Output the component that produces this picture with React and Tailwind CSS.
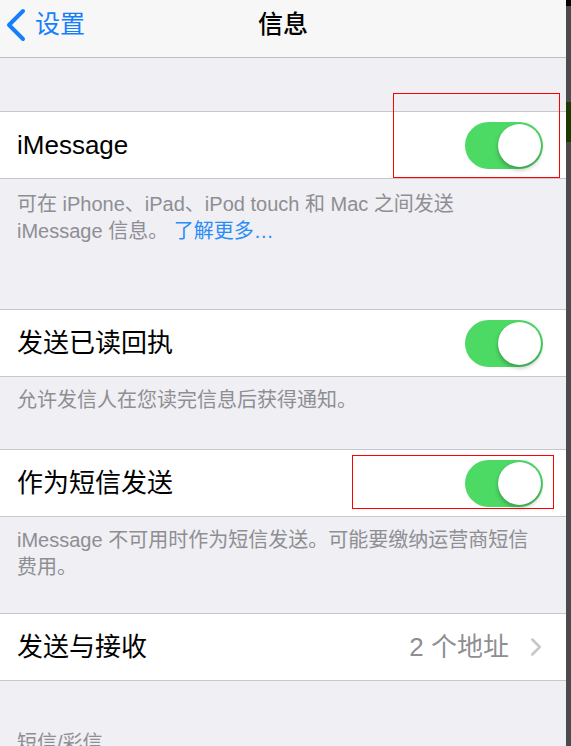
import { ChevronRight } from "lucide-react";

const FONT = {
  fontFamily: '"Liberation Sans", "Noto Sans CJK SC", sans-serif',
};

function Toggle() {
  return (
    <div className="w-[78px] h-[47px] rounded-full bg-[#4cd964] flex items-center justify-end p-[2px]">
      <div className="w-[43px] h-[43px] rounded-full bg-white shadow-[0_3px_4px_rgba(0,0,0,0.25),0_0_1px_rgba(0,0,0,0.2)]" />
    </div>
  );
}

function Row({ label, children }) {
  return (
    <div className="h-[68px] shrink-0 bg-white border-y border-[#c8c7cc] flex items-center justify-between pl-[17px] pr-[23px]">
      <span className="text-[26px] text-black">{label}</span>
      {children}
    </div>
  );
}

function Footer({ h, pt, children }) {
  return (
    <div className={`${h} ${pt} shrink-0 px-[17px] text-[20px] leading-[26.5px] text-[#8e8e93]`}>
      {children}
    </div>
  );
}

export default function App() {
  return (
    <div
      className="relative w-[571px] h-[746px] overflow-hidden flex bg-[#4b4b4b]"
      style={FONT}
    >
      <div className="w-[566px] h-full bg-[#efeff4] flex flex-col">
        {/* nav */}
        <div className="h-[58px] shrink-0 bg-[#f7f7f8] border-b border-[#bdbdc0] grid grid-cols-[1fr_auto_1fr] items-center">
          <div className="flex items-center text-[#157efb] -mt-[8px]">
            <svg width="30" height="34" viewBox="0 0 30 34" className="ml-[2px]">
              <polyline
                points="21,3 7,17 21,31"
                fill="none"
                stroke="currentColor"
                strokeWidth="4"
                strokeLinecap="round"
                strokeLinejoin="round"
              />
            </svg>
            <span className="text-[25px] ml-[3px]">设置</span>
          </div>
          <div className="text-[25px] font-medium text-black -mt-[8px]">信息</div>
          <div />
        </div>

        <div className="h-[53px] shrink-0" />

        <Row label="iMessage">
          <Toggle />
        </Row>
        <Footer h="h-[130px]" pt="pt-[12px]">
          可在 iPhone、iPad、iPod touch 和 Mac 之间发送
          <br />
          iMessage 信息。 <span className="text-[#2a8cf7]">了解更多…</span>
        </Footer>

        <Row label="发送已读回执">
          <Toggle />
        </Row>
        <Footer h="h-[72px]" pt="pt-[10px]">
          允许发信人在您读完信息后获得通知。
        </Footer>

        <Row label="作为短信发送">
          <Toggle />
        </Row>
        <Footer h="h-[96px]" pt="pt-[10px]">
          iMessage 不可用时作为短信发送。可能要缴纳运营商短信
          <br />
          费用。
        </Footer>

        <Row label="发送与接收">
          <div className="flex items-center text-[#8e8e93]">
            <span className="text-[26px]">2 个地址</span>
            <ChevronRight className="w-[30px] h-[30px] ml-[12px] -mr-[8px] text-[#c7c7cc]" strokeWidth={2} />
          </div>
        </Row>
        <div className="shrink-0 pt-[49px] px-[17px] text-[20px] leading-[26px] text-[#8e8e93]">
          短信/彩信
        </div>
      </div>

      {/* right strip */}
      <div className="flex-1 flex flex-col">
        <div className="h-[6px] bg-black" />
        <div className="h-[96px]" />
        <div className="h-[40px] bg-[#1c3a00]" />
      </div>

      {/* annotation boxes */}
      <div className="absolute left-[393px] top-[93px] w-[167px] h-[85px] border border-[#ff0000]" />
      <div className="absolute left-[352px] top-[455px] w-[202px] h-[54px] border border-[#ff0000]" />
    </div>
  );
}
